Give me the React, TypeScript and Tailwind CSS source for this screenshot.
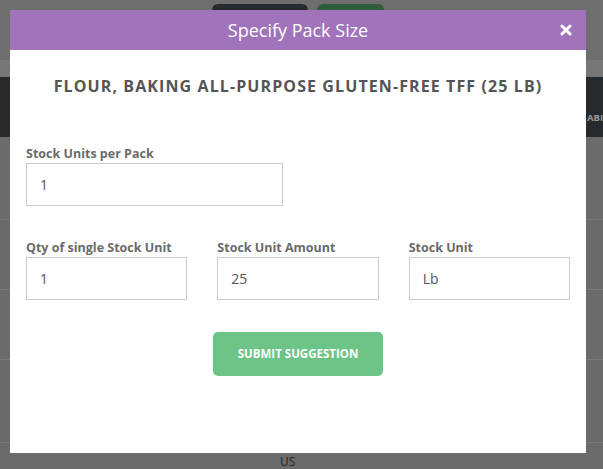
import React from "react";

function Field({ label, value, className = "" }: { label: string; value: string; className?: string }) {
  return (
    <div className={"flex flex-col " + className}>
      <label className="text-[12.5px] font-bold leading-[16px] text-[#6a6a6a] mb-[1px] whitespace-nowrap">{label}</label>
      <div className="h-[43px] border border-[#ccc] flex items-center pl-[13px] text-[14px] text-[#555]">{value}</div>
    </div>
  );
}

export default function App() {
  return (
    <div className="relative w-[603px] h-[469px] overflow-hidden bg-[#6b6b6b]" style={{ fontFamily: '"Open Sans", sans-serif' }}>
      {/* background page */}
      <div className="flex flex-col">
        <div className="h-[60px] bg-[#6e6e6e] flex pl-[212px] gap-[9px] pt-[4px]">
          <div className="w-[96px] h-[30px] rounded-[6px] bg-[#272b2d]" />
          <div className="w-[67px] h-[30px] rounded-[6px] bg-[#2f5d3b]" />
        </div>
        <div className="h-[17px] bg-[#777]" />
        <div className="h-[60px] bg-[#262a2c] flex items-start pl-[587px] pt-[34px]">
          <span className="text-[9.5px] font-bold leading-[14px] text-[#9a9a9a] whitespace-nowrap">ABI</span>
        </div>
        <div className="h-[83px] border-b border-[#7a7a7a] bg-[#6b6b6b]" />
        <div className="h-[70px] border-b border-[#7a7a7a] bg-[#6a6a6a]" />
        <div className="h-[70px] border-b border-[#7a7a7a] bg-[#6b6b6b]" />
        <div className="h-[83px] border-b border-[#7a7a7a] bg-[#6a6a6a]" />
        <div className="h-[26px] flex pl-[280px] pt-[12px]">
          <span className="text-[12px] text-[#222] leading-[14px]">US</span>
        </div>
      </div>

      {/* modal */}
      <div className="absolute left-[10px] top-[10px] w-[576px] h-[443px] bg-white flex flex-col">
        <div className="h-[40px] bg-[#a073bb] flex items-center justify-center relative">
          <span className="text-[18px] text-white leading-[22px]">Specify Pack Size</span>
          <svg className="absolute right-[14px] top-[14px]" width="12" height="12" viewBox="0 0 12 12">
            <path d="M2 2 L10 10 M10 2 L2 10" stroke="white" strokeWidth="3" strokeLinecap="round" />
          </svg>
        </div>
        <div className="px-[16px] flex flex-col">
          <div className="mt-[26px] text-center text-[16px] font-bold leading-[20px] text-[#555] tracking-[1.1px] whitespace-nowrap">
            FLOUR, BAKING ALL-PURPOSE GLUTEN-FREE TFF (25 LB)
          </div>
          <div className="mt-[50px] grid grid-cols-2 gap-[30px] w-[544px]">
            <Field label="Stock Units per Pack" value="1" />
          </div>
          <div className="mt-[34px] grid grid-cols-3 gap-[30px] w-[544px]">
            <Field label="Qty of single Stock Unit" value="1" />
            <Field label="Stock Unit Amount" value="25" />
            <Field label="Stock Unit" value="Lb" />
          </div>
          <div className="mt-[32px] flex justify-center">
            <button className="w-[170px] h-[44px] rounded-[5px] bg-[#6cc486] text-white text-[11.5px] font-bold">SUBMIT SUGGESTION</button>
          </div>
        </div>
      </div>
    </div>
  );
}
